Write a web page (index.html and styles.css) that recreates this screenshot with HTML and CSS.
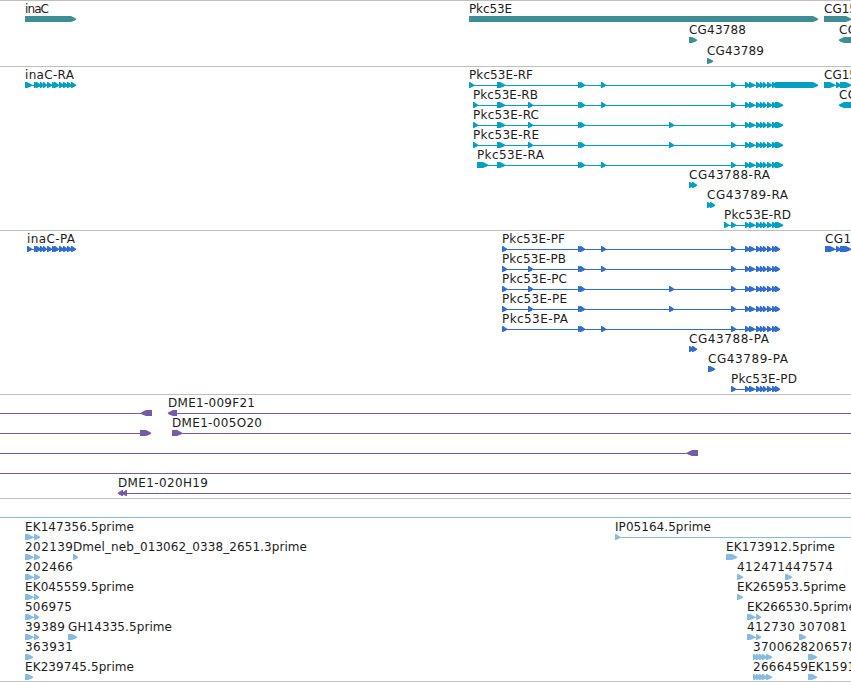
FILE: index.html
```html
<!DOCTYPE html>
<html lang="en">
<head>
    <meta charset="UTF-8">
    <meta name="viewport" content="width=device-width, initial-scale=1.0">
    <title>Genome Tracks</title>
    <link rel="stylesheet" href="styles.css">
</head>

<body>
    <main class="browser">
        <section class="track gene" id="geneTrack"></section>
        <section class="track transcript" id="transcriptTrack"></section>
        <section class="track protein" id="proteinTrack"></section>
        <section class="track bac" id="bacTrack"></section>
        <section class="track est" id="estTrack"></section>
    </main>
    <script src="tracks.js"></script>
</body>
</html>
```
FILE: styles.css
```css
body {
    margin: 0;
    background-color: #fff;
    overflow: hidden;
}
.browser {
    display: flex;
    flex-direction: column;
    width: 851px;
    height: 681px;
    border-bottom: 1px solid #bfbfbf;
}
.track {
    box-sizing: border-box;
    border-top: 1px solid #bfbfbf;
    overflow: hidden;
}
/* exon glyphs reach one pixel below the row box */
.row {
    display: block;
    width: 851px;
    height: 20px;
    overflow: visible;
}
.row text {
    font-family: "DejaVu Sans", sans-serif;
    font-size: 12px;
    fill: #1c1c1c;
}
.row path, .row rect {
    fill: currentColor;
}
.gene {
    height: 66px;
    color: #3f8e95;
}
.gene .row {
    height: 21px;
}
.transcript {
    height: 164px;
    color: #03a0c2;
}
.protein {
    height: 164px;
    color: #306dce;
}
.bac {
    height: 104px;
    color: #7759a9;
}
.est {
    height: 183px;
    color: #87bbdf;
}
```
FILE: tracks.js
```js
const SVG = 'http://www.w3.org/2000/svg';

// coding exons shared by the Pkc53E models
const tail = [[731, 736], [745, 750], [749, 755], [756, 761], [760, 764], [763, 767], [767, 772], [772, 777]];
const mrna = [...tail, [775, 783]];
const cds = [...tail, [775, 780]];
const mid = [[578, 583], [580, 585]];
const inaC = [[34, 39], [36, 41], [40, 44], [43, 47], [47, 52], [52, 57], [54, 59], [59, 64], [63, 68], [67, 72], [71, 76]];

// feature: [label, x, label width, exons, line range]; an exon with x1 > x2 points left
const tracks = {
    geneTrack: [
        [['inaC', 25, 24, [[25, 76]]], ['Pkc53E', 469, 43, [[469, 818]]], ['CG15', 824, 33, [[824, 851]]]],
        [['CG43788', 689, 57, [[689, 697]]], ['CG', 839, 18, [[870, 839]]]],
        [['CG43789', 707, 57, [[707, 713]]]]
    ],
    transcriptTrack: [
        [['inaC-RA', 25, 49, [[25, 32], ...inaC]],
         ['Pkc53E-RF', 469, 64, [[469, 474], [497, 505], ...mid, [601, 606], ...tail, [775, 818]]],
         ['CG15', 824, 33, [[824, 835], [836, 841], [840, 851]]]],
        [['Pkc53E-RB', 473, 65, [[473, 478], [497, 505], [528, 533], ...mid, [601, 606], ...mrna]],
         ['CG', 839, 18, [[870, 839]]]],
        [['Pkc53E-RC', 473, 66, [[473, 478], [497, 505], [528, 533], ...mid, [669, 674], ...mrna]]],
        [['Pkc53E-RE', 473, 66, [[473, 478], [497, 505], [528, 533], ...mid, [669, 674], ...mrna]]],
        [['Pkc53E-RA', 477, 67, [[477, 488], [497, 505], ...mid, [601, 606], ...mrna]]],
        [['CG43788-RA', 689, 81, [[689, 694], [692, 697]]]],
        [['CG43789-RA', 707, 81, [[707, 712], [710, 715]]]],
        [['Pkc53E-RD', 724, 67, [[724, 729], ...mrna]]]
    ],
    proteinTrack: [
        [['inaC-PA', 27, 48, [[27, 32], ...inaC]],
         ['Pkc53E-PF', 502, 63, [[502, 507], ...mid, [601, 606], ...cds]],
         ['CG15', 825, 34, [[825, 835], [836, 841], [840, 851]]]],
        [['Pkc53E-PB', 502, 64, [[502, 507], [528, 533], ...mid, [601, 606], ...cds]]],
        [['Pkc53E-PC', 502, 65, [[502, 507], [528, 533], ...mid, [669, 674], ...cds]]],
        [['Pkc53E-PE', 502, 65, [[502, 507], [528, 533], ...mid, [669, 674], ...cds]]],
        [['Pkc53E-PA', 502, 66, [[502, 507], ...mid, [601, 606], ...cds]]],
        [['CG43788-PA', 689, 80, [[689, 694], [692, 697]]]],
        [['CG43789-PA', 708, 80, [[708, 715]]]],
        [['Pkc53E-PD', 731, 66, cds]]
    ],
    bacTrack: [
        [['', 0, 0, [[152, 141]], [0, 142]], ['DME1-009F21', 168, 87, [[177, 168]], [176, 851]]],
        [['', 0, 0, [[140, 151]], [0, 141]], ['DME1-005O20', 172, 90, [[172, 182]], [173, 851]]],
        [['', 0, 0, [[698, 687]], [0, 690]]],
        [['', 0, 0, [], [0, 851]]],
        [['DME1-020H19', 118, 90, [[123, 118], [127, 122]], [120, 851]]]
    ],
    estTrack: [
        [['', 0, 0, [], [0, 851]]],
        [['EK147356.5prime', 25, 109, [[25, 33], [34, 40]]], ['IP05164.5prime', 615, 96, [[615, 620]], [616, 851]]],
        [['202139', 25, 48, [[25, 33], [34, 40]]], ['Dmel_neb_013062_0338_2651.3prime', 73, 234, [[73, 78]]],
         ['EK173912.5prime', 726, 109, [[726, 737]]]],
        [['202466', 25, 48, [[25, 33], [34, 40]]], ['412471', 737, 48, [[737, 743]]], ['447574', 785, 48, [[785, 792]]]],
        [['EK045559.5prime', 25, 109, [[25, 33], [34, 39]]], ['EK265953.5prime', 737, 109, [[737, 743]]]],
        [['506975', 25, 47, [[25, 33], [34, 39]]], ['EK266530.5prime', 747, 109, [[747, 755], [756, 761]]]],
        [['39389', 25, 40, [[25, 33], [34, 39]]], ['GH14335.5prime', 68, 104, [[68, 77]]],
         ['412730', 747, 48, [[747, 755], [756, 761]]], ['307081', 799, 48, [[799, 806]]]],
        [['363931', 25, 48, [[25, 33]]],
         ['3700628', 753, 55, [[753, 758], [756, 761], [759, 764], [762, 767], [766, 772]]], ['206578', 808, 48, [[808, 817]]]],
        [['EK239745.5prime', 25, 109, [[25, 33]]],
         ['2666459', 753, 55, [[753, 758], [756, 761], [759, 764], [762, 767], [766, 772]]], ['EK15911', 808, 55, [[808, 817]]]]
    ]
};

function add(parent, name, attrs) {
    const el = document.createElementNS(SVG, name);
    for (const key in attrs) {
        el.setAttribute(key, attrs[key]);
    }
    parent.appendChild(el);
    return el;
}

function drawExon(row, from, to) {
    const dir = to > from ? 1 : -1;
    const head = Math.min(Math.abs(to - from) - 1, 5) * dir;
    const neck = to - head;
    add(row, 'path', {
        d: `M${from} 15H${neck}L${to - dir} 17L${to + dir * 0.5} 18L${to - dir} 19.5L${neck} 21H${from}Z`
    });
}

for (const id in tracks) {
    const track = document.getElementById(id);
    tracks[id].forEach(features => {
        const row = add(track, 'svg', {class: 'row'});
        features.forEach(([label, x, width, exons, range]) => {
            const line = range || [exons[0][0], exons[exons.length - 1][1]];
            if (range || exons.length > 1) {
                add(row, 'rect', {x: line[0], y: 18, width: line[1] - line[0], height: 1});
            }
            exons.forEach(([from, to]) => drawExon(row, from, to));
            if (label) {
                add(row, 'text', {x: x, y: 12, textLength: width}).textContent = label;
            }
        });
    });
}
```
